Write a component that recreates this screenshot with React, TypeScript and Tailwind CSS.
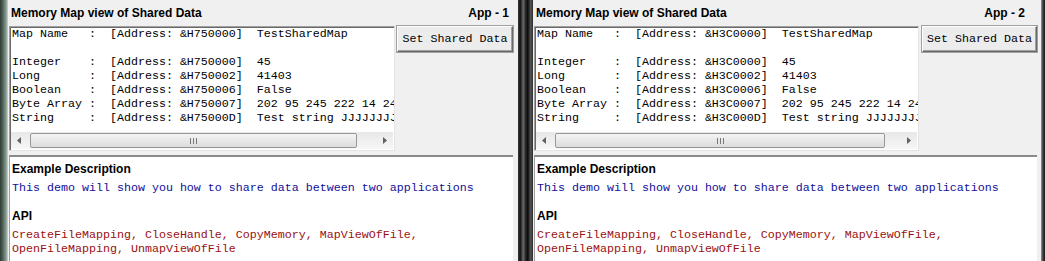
import React from "react";

const mono = "font-['Liberation_Mono','Courier_New',monospace] text-[11.67px] leading-[14px]";
const sans = "font-['Liberation_Sans',Arial,sans-serif] font-bold text-[12px] leading-[14px]";

function Scrollbar({ thumbEnd }: { thumbEnd: number }) {
  return (
    <div className="flex h-[17px] items-stretch bg-[#f0f0f0] bg-[linear-gradient(to_bottom,#e8e8e8,#f6f6f6)]">
      <div className="flex w-[17px] items-center justify-center">
        <svg width="5" height="7" viewBox="0 0 5 7">
          <path d="M4 0 L0 3.5 L4 7 Z" fill="#606060" />
        </svg>
      </div>
      <div className="flex-1 relative">
        <div
          className="absolute top-[1px] bottom-[1px] left-[2px] flex items-center justify-center rounded-[2px] border border-[#979797] bg-[linear-gradient(to_bottom,#f4f4f4,#dcdcdc)]"
          style={{ width: thumbEnd }}
        >
          <div className="flex gap-[2px]">
            <div className="h-[6px] w-[1px] bg-[#777]" />
            <div className="h-[6px] w-[1px] bg-[#777]" />
            <div className="h-[6px] w-[1px] bg-[#777]" />
          </div>
        </div>
      </div>
      <div className="flex w-[17px] items-center justify-center">
        <svg width="5" height="7" viewBox="0 0 5 7">
          <path d="M1 0 L5 3.5 L1 7 Z" fill="#606060" />
        </svg>
      </div>
    </div>
  );
}

function AppWindow({
  app,
  addr,
  listW,
  gap,
  padL,
  padR,
  titlePad,
  thumb,
}: {
  app: string;
  addr: string;
  listW: number;
  gap: number;
  padL: string;
  padR: string;
  titlePad: string;
  thumb: number;
}) {
  const rows: [string, string, string][] = [
    ["Map Name   :", `[Address: &H${addr}000]`, "TestSharedMap"],
    ["", "", ""],
    ["Integer    :", `[Address: &H${addr}000]`, "45"],
    ["Long       :", `[Address: &H${addr}002]`, "41403"],
    ["Boolean    :", `[Address: &H${addr}006]`, "False"],
    ["Byte Array :", `[Address: &H${addr}007]`, "202 95 245 222 14 244"],
    ["String     :", `[Address: &H${addr}00D]`, "Test string JJJJJJJJ"],
  ];
  return (
    <div className={`flex h-full flex-1 flex-col bg-[#f0f0f0] ${padL}`}>
      <div className={`flex h-[26px] items-center justify-between ${titlePad} ${padR}`}>
        <span className={sans}>Memory Map view of Shared Data</span>
        <span className={sans}>{app}</span>
      </div>
      <div className="flex items-start" style={{ gap }}>
        <div
          className="flex h-[125px] flex-col justify-between border border-[#a0a0a0] border-b-[#e3e3e3] border-r-[#e3e3e3] bg-white shadow-[inset_1px_1px_0_#696969]"
          style={{ width: listW }}
        >
          <div className={`${mono} overflow-hidden whitespace-pre pl-[2px] text-black`}>
            {rows.map((r, i) => (
              <div key={i} className="h-[14px]">
                {r[0] ? `${r[0]}  ${r[1]}  ${r[2]}` : " "}
              </div>
            ))}
          </div>
          <div className="mb-[1px] ml-[1px] mr-[1px]">
            <Scrollbar thumbEnd={thumb} />
          </div>
        </div>
        <button className={`${mono} h-[26px] w-[116px] border border-t-white border-l-white border-b-[#696969] border-r-[#696969] bg-[#ececec] text-black shadow-[inset_-1px_-1px_0_#a0a0a0] outline outline-1 outline-[#a0a0a0]`}>
          Set Shared Data
        </button>
      </div>
      <div className="mt-[4px] flex-1 border-l border-t-2 border-l-[#a0a0a0] border-t-[#8a8a8a] bg-white pl-[2px] pt-[5px]">
        <div className={`${sans} text-black`}>Example Description</div>
        <div className={`${mono} mt-[5px] text-[#10109a]`}>
          This demo will show you how to share data between two applications
        </div>
        <div className={`${sans} mt-[14px] text-black`}>API</div>
        <div className={`${mono} mt-[5px] text-[#9a1010]`}>
          CreateFileMapping, CloseHandle, CopyMemory, MapViewOfFile,
        </div>
        <div className={`${mono} text-[#9a1010]`}>OpenFileMapping, UnmapViewOfFile</div>
      </div>
    </div>
  );
}

export default function App() {
  return (
    <div className="flex h-[261px] w-[1045px] overflow-hidden bg-[#f0f0f0]">
      <div className="w-[8px] bg-[linear-gradient(to_right,#2e3a34,#56685e_40%,#8fa39a_80%,#d0d8d4)]" />
      <div className="flex w-[510px] flex-col">
        <AppWindow
          app="App - 1"
          addr="750"
          listW={386}
          gap={2}
          padL="pl-[1px] pr-[5px]"
          padR="pr-[4px]"
          titlePad="pl-[2px]"
          thumb={327}
        />
      </div>
      <div className="w-[15px] bg-[linear-gradient(to_right,#3a3a3a,#111_15%,#6a6a6a_35%,#2a2a2a_50%,#0a0a0a_65%,#555_85%,#2a2a2a)]" />
      <div className="flex w-[508px] flex-col">
        <AppWindow
          app="App - 2"
          addr="3C0"
          listW={385}
          gap={3}
          padL="pl-[1px] pr-[4px]"
          padR="pr-[12px]"
          titlePad="pl-[2px]"
          thumb={330}
        />
      </div>
      <div className="w-[4px] bg-[linear-gradient(to_right,#9a9a9a,#3a3a3a,#1a1a1a)]" />
    </div>
  );
}
